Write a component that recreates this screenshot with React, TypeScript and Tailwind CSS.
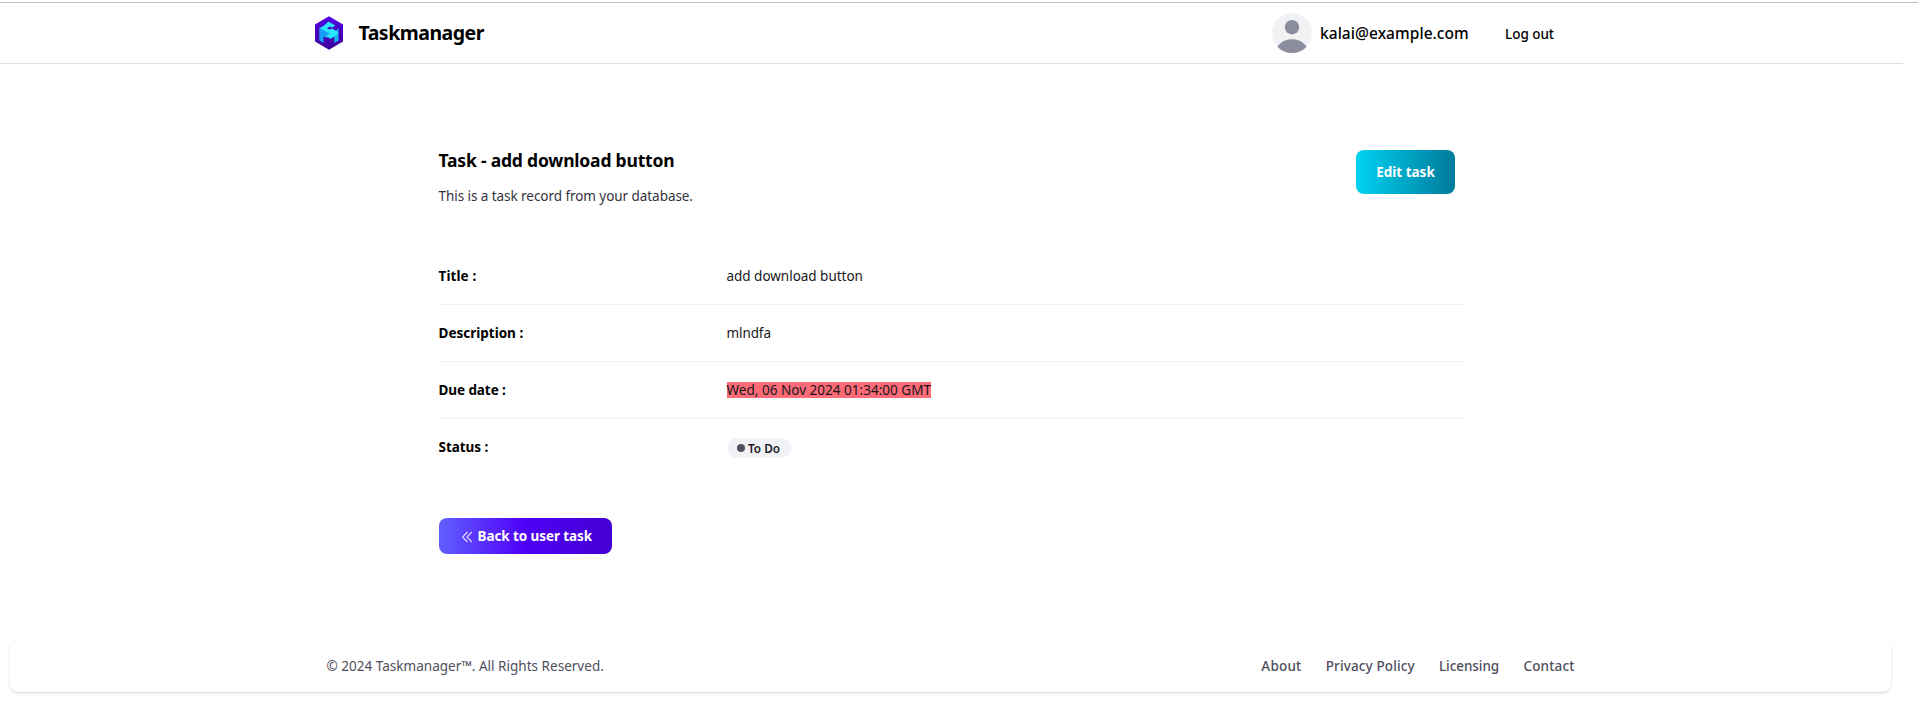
import type { ReactNode } from "react";

function Logo() {
  return (
    <svg viewBox="0 0 28 34" className="h-[34px] w-7">
      <defs>
        <linearGradient id="hex" x1="0" y1="0" x2="0" y2="1">
          <stop offset="0" stopColor="#5203e2" />
          <stop offset="1" stopColor="#3b0299" />
        </linearGradient>
      </defs>
      <path d="M14 0.3 L28 8.4 V25.4 L14 33.7 L0 25.4 V8.4 Z" fill="url(#hex)" />
      <path d="M4.3 11.5 L14 16.5 V20 L11.5 22 L8.6 20.4 V27 L4.3 24.6 Z" fill="#1b9cf4" />
      <path d="M14 21 L19 17 L23.6 12 V24.6 L19.3 27 V20.8 L15.2 23.2 Z" fill="#18b4f2" />
      <path d="M13.2 5.6 L20.4 9.4 L17.2 11.4 L15 10.6 L12 12.2 L14.4 13.6 L17 12.4 L21.5 15 L23.2 18 L15.5 22.4 L11 20.2 L14.6 17.6 L4.6 12 L9.2 9.4 Z" fill="#2be6fd" />
    </svg>
  );
}

function Avatar() {
  return (
    <svg viewBox="0 0 40 40" className="size-10">
      <defs>
        <clipPath id="avatar">
          <circle cx="20" cy="20" r="20" />
        </clipPath>
      </defs>
      <g clipPath="url(#avatar)">
        <rect width="40" height="40" fill="#f1f2f4" />
        <circle cx="20" cy="14.2" r="7.2" fill="#8b8c9e" />
        <ellipse cx="20" cy="40" rx="16.3" ry="13.8" fill="#8b8c9e" />
      </g>
    </svg>
  );
}

function Row({ label, last, children }: { label: ReactNode; last?: boolean; children: ReactNode }) {
  return (
    <div className={last ? "flex h-14 items-center" : "flex h-[57px] items-center border-b border-[#f0f0f2]"}>
      <dt className="w-[288px] font-bold text-black">{label}</dt>
      <dd className="flex items-center text-[#18181c]">{children}</dd>
    </div>
  );
}

export default function App() {
  return (
    <div className="h-[705px] overflow-hidden bg-white pt-0.5 font-['Noto_Sans',sans-serif] text-[13.5px] leading-5 text-black">
      <div className="h-px bg-[#bdbdbd]" />
      <div className="w-[1903px]">
        <header className="flex h-[61px] items-center border-b border-[#dedede] pl-[315px]">
          <Logo />
          <span className="ml-[15.5px] text-[19.5px] font-bold tracking-[-0.51px]">Taskmanager</span>
          <div className="ml-auto flex items-center pr-[349px]">
            <Avatar />
            <span className="ml-2 w-[149px] text-[15.5px] font-medium tracking-[0.05px] whitespace-nowrap">kalai@example.com</span>
            <a href="#" className="ml-9 w-[49px] pt-0.5 font-medium tracking-[-0.04px] whitespace-nowrap">Log out</a>
          </div>
        </header>

        <main className="ml-[438.5px] w-[1024.5px] pt-[82px]">
          <div className="flex justify-between pr-2">
            <div>
              <h1 className="text-[17.5px] leading-7 font-bold tracking-[-0.19px]">Task - add download button</h1>
              <p className="mt-3 tracking-[-0.058px] text-[#33333d]">This is a task record from your database.</p>
            </div>
            <button className="mt-1 h-11 w-[99px] rounded-lg bg-linear-to-r/srgb from-[#00d3f2] to-[#007a9b] font-bold tracking-[-0.01px] text-white">
              Edit task
            </button>
          </div>

          <dl className="mt-[42px]">
            <Row label={<span className="tracking-[0.1px]">Title :</span>}>
              <span className="tracking-[-0.02px]">add download button</span>
            </Row>
            <Row label="Description :">
              <span className="tracking-[-0.1px]">mlndfa</span>
            </Row>
            <Row label={<span className="tracking-[-0.08px]">Due date :</span>}>
              <span className="h-4 bg-[#ff6b77] leading-4 tracking-[0.022px]">Wed, 06 Nov 2024 01:34:00 GMT</span>
            </Row>
            <Row label={<span className="tracking-[-0.04px]">Status :</span>} last>
              <span className="mt-0.5 flex h-5 w-16 items-center rounded-full bg-[#f1f2f5] pl-2.5">
                <span className="size-2 rounded-full bg-[#50505f]" />
                <span className="ml-[3.5px] -mt-px text-[11.75px] font-semibold whitespace-nowrap">To Do</span>
              </span>
            </Row>
          </dl>

          <button className="mt-[43px] flex h-9 w-[173px] items-center rounded-lg bg-linear-to-r/srgb from-[#615fff] via-[#4f00f7] to-[#4400d2] pl-[23px] font-bold tracking-[-0.08px] whitespace-nowrap text-white">
            <svg viewBox="0 0 10 10" className="mt-px mr-1.5 size-2.5 overflow-visible" fill="none" stroke="#e4dbff" strokeWidth="1.1">
              <path d="M5.4 0 L0.6 5 L5.4 10 M9.8 0 L5 5 L9.8 10" />
            </svg>
            Back to user task
          </button>
        </main>

        <footer className="mt-[86px] mr-3 ml-[9.5px] flex h-[52px] items-center justify-between rounded-lg pr-[316.5px] pl-[317px] text-[#4e4e5d] shadow-[0_1px_3px_0_rgb(0_0_0/0.12),0_1px_2px_-1px_rgb(0_0_0/0.16)]">
          <span className="tracking-[0.02px]">© 2024 Taskmanager™. All Rights Reserved.</span>
          <nav className="flex gap-[24.3px] font-medium whitespace-nowrap">
            <a href="#" className="tracking-[0.2px]">About</a>
            <a href="#" className="tracking-[0.12px]">Privacy Policy</a>
            <a href="#" className="tracking-[-0.06px]">Licensing</a>
            <a href="#" className="tracking-[0.15px]">Contact</a>
          </nav>
        </footer>
      </div>
    </div>
  );
}
